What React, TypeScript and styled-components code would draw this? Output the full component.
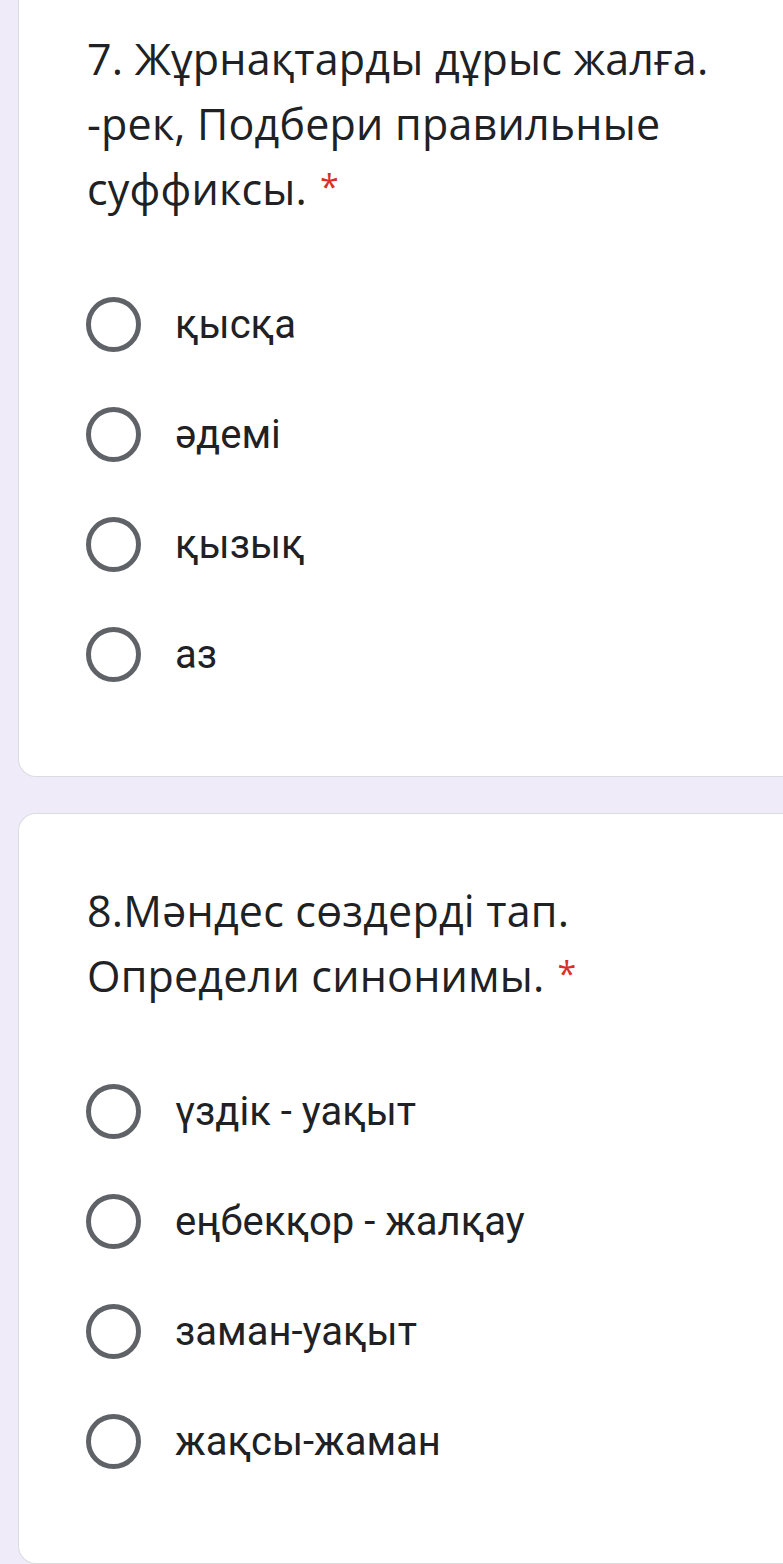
import React from "react";
import styled, { createGlobalStyle } from "styled-components";

const Global = createGlobalStyle`
  html, body {
    margin: 0;
    padding: 0;
    background: #efebf8;
  }
  body {
    overflow: hidden;
  }
`;

const Page = styled.div`
  display: flex;
  flex-direction: column;
  gap: 36px;
  padding-left: 18px;
  padding-bottom: 1px;
`;

const Card = styled.section<{ $first?: boolean }>`
  background: #ffffff;
  border: 1px solid #dadce0;
  border-right: none;
  border-top: ${(p) => (p.$first ? "none" : "1px solid #dadce0")};
  border-radius: ${(p) => (p.$first ? "0 0 0 18px" : "18px 0 0 18px")};
  padding: ${(p) => (p.$first ? "26px" : "64px")} 0 67px 68px;
`;

const Title = styled.h2`
  margin: 0 0 48px 0;
  font-family: "Open Sans", "Noto Sans", sans-serif;
  font-weight: 400;
  font-size: 43px;
  letter-spacing: 0.2px;
  line-height: 65px;
  color: #202124;
  max-width: 660px;
`;

const Required = styled.span`
  display: inline-block;
  color: #d93025;
  margin-left: 13px;
  font-size: 34px;
  line-height: 1;
  vertical-align: 6px;
`;

const Options = styled.div`
  display: flex;
  flex-direction: column;
`;

const Option = styled.label`
  display: flex;
  align-items: center;
  height: 110px;
  gap: 34px;
`;

const Radio = styled.span`
  display: block;
  box-sizing: border-box;
  width: 55px;
  height: 55px;
  border: 5px solid #5f6368;
  border-radius: 50%;
  margin-left: -1px;
`;

const OptionText = styled.span`
  font-family: Roboto, "Noto Sans", sans-serif;
  font-size: 40px;
  color: #202124;
`;

type Q = { title: string; options: string[] };

const questions: Q[] = [
  {
    title: "7. Жұрнақтарды дұрыс жалға. -рек, Подбери правильные суффиксы.",
    options: ["қысқа", "әдемі", "қызық", "аз"],
  },
  {
    title: "8.Мәндес сөздерді тап. Определи синонимы.",
    options: ["үздік - уақыт", "еңбекқор - жалқау", "заман-уақыт", "жақсы-жаман"],
  },
];

export default function App() {
  return (
    <>
      <Global />
      <Page>
        {questions.map((q, i) => (
          <Card key={i} $first={i === 0}>
            <Title>
              {q.title}
              <Required>*</Required>
            </Title>
            <Options>
              {q.options.map((o) => (
                <Option key={o}>
                  <Radio />
                  <OptionText>{o}</OptionText>
                </Option>
              ))}
            </Options>
          </Card>
        ))}
      </Page>
    </>
  );
}
